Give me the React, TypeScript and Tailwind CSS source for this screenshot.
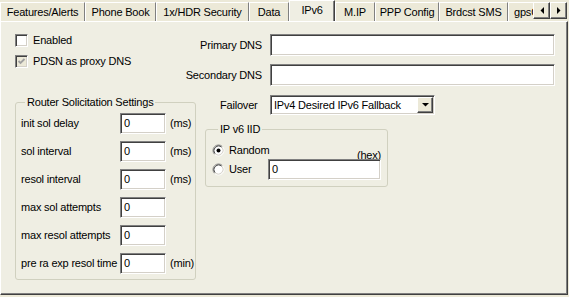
import React from "react";

// classic win32 bevels
const sunken =
  "border border-t-[#808080] border-l-[#808080] border-b-white border-r-white shadow-[inset_1px_1px_0_#404040,inset_-1px_-1px_0_#d4d0c8]";
const raised =
  "bg-[#ece9d8] border border-t-white border-l-white border-b-[#404040] border-r-[#404040] shadow-[inset_-1px_-1px_0_#808080]";

const tabs = [
  { label: "Features/Alerts", cls: "w-[85px]" },
  { label: "Phone Book", cls: "w-[71px]" },
  { label: "1x/HDR Security", cls: "w-[93px]" },
  { label: "Data", cls: "w-[40px]" },
  { label: "IPv6", cls: "w-[46px]", active: true },
  { label: "M.IP", cls: "w-[40px]" },
  { label: "PPP Config", cls: "w-[64px]" },
  { label: "Brdcst SMS", cls: "w-[69px]" },
  { label: "gpsOne", cls: "w-[60px] justify-start pl-[5px]" },
];

const solRows = [
  { label: "init sol delay", unit: "(ms)" },
  { label: "sol interval", unit: "(ms)" },
  { label: "resol interval", unit: "(ms)" },
  { label: "max sol attempts", unit: "" },
  { label: "max resol attempts", unit: "" },
  { label: "pre ra exp resol time", unit: "(min)" },
];

function CheckBox({ checked, disabled }: { checked?: boolean; disabled?: boolean }) {
  return (
    <div
      className={`w-[13px] h-[13px] shrink-0 flex items-center justify-center ${sunken} ${
        disabled ? "bg-[#ece9d8]" : "bg-white"
      }`}
    >
      {checked && (
        <svg width="9" height="9" viewBox="0 0 9 9">
          <polyline
            points="1.5,4 3.5,6 7.5,2"
            fill="none"
            stroke={disabled ? "#a0a0a0" : "#000"}
            strokeWidth="1.8"
          />
        </svg>
      )}
    </div>
  );
}

function Radio({ checked }: { checked?: boolean }) {
  return (
    <svg width="13" height="13" viewBox="0 0 13 13" className="shrink-0">
      <circle cx="6.5" cy="6.5" r="5" fill="#fff" />
      <path d="M2.61 10.39 A5.5 5.5 0 0 1 10.39 2.61" fill="none" stroke="#808080" />
      <path d="M10.39 2.61 A5.5 5.5 0 0 1 2.61 10.39" fill="none" stroke="#fff" />
      <path d="M3.32 9.68 A4.5 4.5 0 0 1 9.68 3.32" fill="none" stroke="#404040" />
      <path d="M9.68 3.32 A4.5 4.5 0 0 1 3.32 9.68" fill="none" stroke="#d4d0c8" />
      {checked && <circle cx="6.5" cy="6.5" r="2" fill="#000" />}
    </svg>
  );
}

function Field({ cls, value }: { cls: string; value?: string }) {
  return (
    <div className={`bg-white flex items-center pl-[3px] ${sunken} ${cls}`}>
      {value}
    </div>
  );
}

export default function App() {
  return (
    <div className="w-[569px] h-[297px] bg-[#ece9d8] text-black text-[11px] leading-[13px] tracking-[-0.2px] font-['Liberation_Sans',Arial,sans-serif] overflow-hidden">
      {/* tab strip */}
      <div className="flex h-[21px]">
        <div className="flex items-start w-[533px] overflow-hidden">
          {tabs.map((t) =>
            t.active ? (
              <div
                key={t.label}
                className={`${t.cls} shrink-0 h-[22px] relative z-10 flex items-center justify-center pb-[3px] bg-[#efeee3] border-t border-l border-r border-t-white border-l-white border-r-[#404040] shadow-[inset_-1px_0_0_#808080]`}
              >
                {t.label}
              </div>
            ) : (
              <div
                key={t.label}
                className={`${t.cls} shrink-0 h-[19px] mt-[2px] flex items-center justify-center whitespace-nowrap border-t border-l border-r border-t-white border-l-white border-r-[#808080]`}
              >
                {t.label}
              </div>
            )
          )}
        </div>
        <div className="flex mt-[2px] h-[17px]">
          <div className={`w-[17px] h-[17px] flex items-center justify-center ${raised}`}>
            <svg width="4" height="7" viewBox="0 0 4 7">
              <polygon points="4,0 4,7 0.5,3.5" fill="#000" />
            </svg>
          </div>
          <div className={`w-[17px] h-[17px] flex items-center justify-center ${raised}`}>
            <svg width="4" height="7" viewBox="0 0 4 7">
              <polygon points="0,0 0,7 3.5,3.5" fill="#000" />
            </svg>
          </div>
        </div>
      </div>

      {/* tab page */}
      <div className="w-[568px] h-[274px] bg-[#efeee3] border border-t-white border-l-white border-r-[#404040] border-b-[#404040] shadow-[inset_-1px_-1px_0_#808080]">
        {/* top section */}
        <div className="flex pt-[12px] pl-[14px] pr-[12px]">
          <div className="flex flex-col gap-[8px]">
            <div className="flex items-center gap-[5px] h-[13px]">
              <CheckBox />
              <span>Enabled</span>
            </div>
            <div className="flex items-center gap-[5px] h-[13px]">
              <CheckBox checked disabled />
              <span>PDSN as proxy DNS</span>
            </div>
          </div>
          <div className="ml-auto flex flex-col gap-[8px]">
            <div className="flex items-center justify-end gap-[8px]">
              <span>Primary DNS</span>
              <Field cls="w-[285px] h-[22px]" />
            </div>
            <div className="flex items-center justify-end gap-[8px]">
              <span>Secondary DNS</span>
              <Field cls="w-[285px] h-[22px]" />
            </div>
          </div>
        </div>

        {/* bottom section */}
        <div className="flex items-start mt-[9px] pl-[14px]">
          <fieldset className="w-[181px] mt-[1px] border border-[#d0d0bf] rounded-[3px] pl-[5px] pt-[4px] pb-[5px]">
            <legend className="ml-[4px] px-[2px]">Router Solicitation Settings</legend>
            <div className="flex flex-col gap-[7px]">
              {solRows.map((r) => (
                <div key={r.label} className="flex items-center h-[21px]">
                  <span className="w-[99px] whitespace-nowrap">{r.label}</span>
                  <Field cls="w-[46px] h-[21px]" value="0" />
                  <span className="ml-[4px]">{r.unit}</span>
                </div>
              ))}
            </div>
          </fieldset>

          <div className="ml-[9px] flex flex-col">
            <div className="flex items-center h-[20px]">
              <span className="w-[65px] pl-[15px]">Failover</span>
              <div className={`w-[165px] h-[20px] bg-white flex items-center p-[1px] ${sunken}`}>
                <span className="flex-1 pl-[2px] whitespace-nowrap">IPv4 Desired IPv6 Fallback</span>
                <div className={`w-[16px] h-[16px] flex items-center justify-center ${raised}`}>
                  <svg width="7" height="4" viewBox="0 0 7 4">
                    <polygon points="0,0 7,0 3.5,3.5" fill="#000" />
                  </svg>
                </div>
              </div>
            </div>

            <fieldset className="w-[183px] mt-[8px] border border-[#d0d0bf] rounded-[3px] pl-[6px] pr-[6px] pt-[8px] pb-[6px]">
              <legend className="ml-[6px] px-[2px]">IP v6 IID</legend>
              <div className="flex items-center h-[13px]">
                <Radio checked />
                <span className="ml-[4px]">Random</span>
                <span className="ml-auto mt-[10px]">(hex)</span>
              </div>
              <div className="flex items-center mt-[2px]">
                <Radio />
                <span className="ml-[4px] w-[39px]">User</span>
                <Field cls="w-[113px] h-[21px]" value="0" />
              </div>
            </fieldset>
          </div>
        </div>
      </div>
    </div>
  );
}
